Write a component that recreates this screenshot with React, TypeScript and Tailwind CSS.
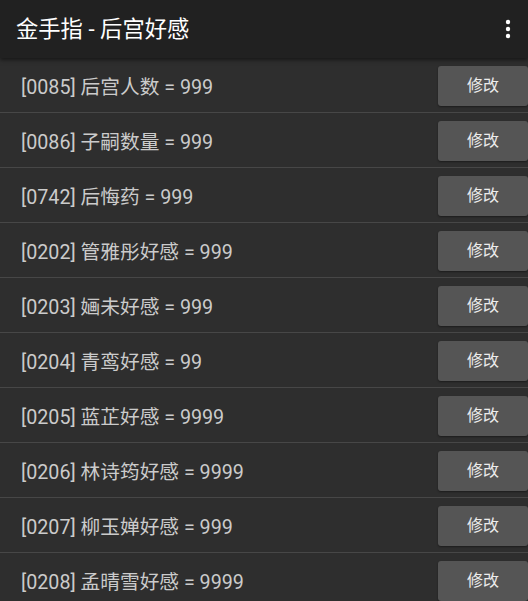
import React from "react";

const rows = [
  "[0085] 后宫人数 = 999",
  "[0086] 子嗣数量 = 999",
  "[0742] 后悔药 = 999",
  "[0202] 管雅彤好感 = 999",
  "[0203] 婳未好感 = 999",
  "[0204] 青鸾好感 = 99",
  "[0205] 蓝芷好感 = 9999",
  "[0206] 林诗筠好感 = 9999",
  "[0207] 柳玉婵好感 = 999",
  "[0208] 孟晴雪好感 = 9999",
];

export default function App() {
  return (
    <div
      className="w-[528px] h-[601px] overflow-hidden bg-[#2e2e2e] relative"
      style={{ fontFamily: "Roboto, 'Noto Sans CJK SC', sans-serif" }}
    >
      <div className="relative z-10 h-[58px] bg-[#212121] flex items-center justify-between pl-4 pr-[16px] shadow-[0_2px_4px_rgba(0,0,0,0.5)]">
        <span className="text-white text-[22.3px] leading-none">金手指 - 后宫好感</span>
        <svg width="6" height="20" viewBox="0 0 6 20" className="mr-[1px]">
          <circle cx="3" cy="3" r="2.2" fill="#fff" />
          <circle cx="3" cy="10" r="2.2" fill="#fff" />
          <circle cx="3" cy="17" r="2.2" fill="#fff" />
        </svg>
      </div>
      <div className="flex flex-col">
        {rows.map((r) => (
          <div
            key={r}
            className="h-[55px] shrink-0 flex items-start justify-between border-b border-[#474747] pt-[8px]"
          >
            <span className="text-[#cbcbcb] text-[19.7px] pl-[21px] pt-[2px] leading-[40px]">{r}</span>
            <button className="w-[90px] h-[40px] rounded-[3px] bg-[#555555] text-[#ececec] text-[16px] shadow-[0_1px_2px_rgba(0,0,0,0.4)]">
              修改
            </button>
          </div>
        ))}
      </div>
    </div>
  );
}
